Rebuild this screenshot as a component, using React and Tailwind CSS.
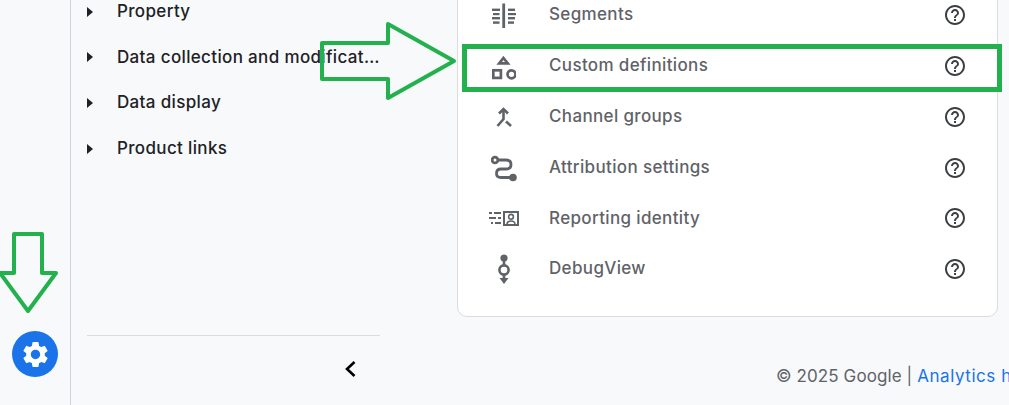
import React from 'react';
import { MdHelpOutline, MdSettings } from 'react-icons/md';

const navItems = ['Property', 'Data collection and modificat…', 'Data display', 'Product links'];

const SegmentsIcon = () => (
  <svg width="24" height="28" viewBox="0 0 24 28" fill="#5f6368">
    <rect x="10.3" y="2.5" width="2.8" height="24.5" />
    <rect x="0" y="7.6" width="8" height="2.4" />
    <rect x="1" y="12" width="6.5" height="2.2" />
    <rect x="0" y="16" width="8" height="2.4" />
    <rect x="1" y="20.4" width="6.5" height="2.4" />
    <rect x="16" y="7.6" width="7" height="2.4" />
    <rect x="16" y="12" width="8" height="2.2" />
    <rect x="16" y="16" width="7" height="2.4" />
    <rect x="16" y="20.4" width="6" height="2.4" />
  </svg>
);

const CustomIcon = () => (
  <svg width="24" height="28" viewBox="0 0 24 28" fill="none" stroke="#5f6368" strokeWidth="2.7">
    <path d="M11.5 6 L15.8 11.4 H7.2 Z" />
    <rect x="1.3" y="18.3" width="7.6" height="7.6" />
    <circle cx="19.5" cy="22.3" r="4" />
  </svg>
);

const ChannelIcon = () => (
  <svg width="24" height="28" viewBox="0 0 24 28" fill="none" stroke="#5f6368" strokeWidth="2.6">
    <path d="M7 10.5 L11.5 6 L16 10.5" />
    <path d="M11.5 6 V16 L5.5 23" />
    <path d="M14 18.5 L19 23" />
  </svg>
);

const AttributionIcon = () => (
  <svg width="26" height="28" viewBox="0 0 26 28" fill="none" stroke="#5f6368" strokeWidth="2.8">
    <circle cx="4" cy="6" r="2.9" />
    <path d="M7 6 H15 Q20 6 20 10.5 Q20 15 15 15 H10 Q5.5 15 5.5 19.5 Q5.5 23.5 10 23.5 H20" />
    <circle cx="22" cy="23.5" r="3.8" fill="#5f6368" stroke="none" />
  </svg>
);

const IdentityIcon = () => (
  <svg width="30" height="28" viewBox="0 0 30 28" fill="none" stroke="#5f6368">
    <rect x="15" y="8" width="14" height="13" strokeWidth="2" />
    <circle cx="22" cy="12.8" r="2.4" strokeWidth="1.6" />
    <path d="M18 20 C18.5 16 25.5 16 26 20" strokeWidth="1.6" />
    <path d="M0 9 H3 M5 9 H12 M0 14 H7 M9 14 H12 M2 19 H4 M6 19 H12" strokeWidth="2" />
  </svg>
);

const DebugIcon = () => (
  <svg width="24" height="32" viewBox="0 0 24 32" fill="none" stroke="#5f6368" strokeWidth="2.6">
    <circle cx="12" cy="5" r="3.6" fill="#5f6368" stroke="none" />
    <path d="M12 8 V13" />
    <circle cx="12" cy="17" r="4.6" />
    <path d="M12 21 V27" />
    <path d="M7.5 25 L12 31 L16.5 25 Z" fill="#5f6368" stroke="none" />
  </svg>
);

const settingsRows = [
  { label: 'Segments', Icon: SegmentsIcon },
  { label: 'Custom definitions', Icon: CustomIcon },
  { label: 'Channel groups', Icon: ChannelIcon },
  { label: 'Attribution settings', Icon: AttributionIcon },
  { label: 'Reporting identity', Icon: IdentityIcon },
  { label: 'DebugView', Icon: DebugIcon },
];

export default function App() {
  return (
    <div className="relative flex h-[405px] w-[1009px] overflow-hidden bg-[#f8f9fb] font-['Inter',sans-serif] text-[17px] tracking-[0.35px]">
      {/* Left rail */}
      <div className="flex w-[71px] shrink-0 flex-col justify-end border-r border-[#d0d2d6] pb-[28px] pl-[12px]">
        <div className="flex h-[46px] w-[46px] items-center justify-center rounded-full bg-[#1a73e8]">
          <MdSettings size={31} color="#ffffff" />
        </div>
      </div>

      {/* Property nav */}
      <div className="flex w-[386px] shrink-0 flex-col pl-[16px]">
        <div className="mt-[-11px] flex flex-col">
          {navItems.map((item) => (
            <div key={item} className="flex h-[45.6px] items-center text-[#202124]">
              <svg width="8" height="12" viewBox="0 0 8 12" className="-ml-[1px]" fill="#202124">
                <path d="M1 1 L7 6 L1 11 Z" />
              </svg>
              <span className="ml-[23px] whitespace-nowrap font-[450]">{item}</span>
            </div>
          ))}
        </div>
        <div className="mt-auto w-[293px] border-t border-[#dadce0]" />
        <div className="flex h-[69px] w-[293px] items-center justify-end pb-[3px] pr-[23px]">
          <svg width="14" height="18" viewBox="0 0 14 18" fill="none" stroke="#000000" strokeWidth="2.6">
            <path d="M11.5 2 L4 9 L11.5 16" />
          </svg>
        </div>
      </div>

      {/* Settings card and footer */}
      <div className="flex min-w-0 flex-1 flex-col">
        <div className="mt-[-11.2px] w-[541px] rounded-b-[10px] border border-[#dadce0] bg-white pb-[21px]">
          {settingsRows.map(({ label, Icon }) => (
            <div key={label} className="flex h-[50.8px] items-center pr-[30px] text-[#5f6368]">
              <div className="flex w-[91px] justify-center">
                <Icon />
              </div>
              <span className="flex-1 font-[450]">{label}</span>
              <MdHelpOutline size={24} color="#3c4043" />
            </div>
          ))}
        </div>
        <div className="ml-[319px] mt-[47px] whitespace-nowrap tracking-[0.1px] text-[#5f6368]">
          © 2025 Google | <span className="tracking-[0.55px] text-[#1a73e8]">Analytics home</span>
        </div>
      </div>

      {/* Green annotations drawn over the page */}
      <svg className="pointer-events-none absolute left-0 top-0" width="1009" height="405" fill="none" stroke="#22b14c">
        <path d="M322 43 H388 V24 L454 61 L388 98 V79 H322 Z" strokeWidth="4" strokeLinejoin="round" />
        <rect x="464.5" y="46.5" width="535" height="43" strokeWidth="5" />
        <path d="M14 234 H42 V273 H56 L28 311 L0 273 H14 Z" strokeWidth="4" strokeLinejoin="round" />
      </svg>
    </div>
  );
}
